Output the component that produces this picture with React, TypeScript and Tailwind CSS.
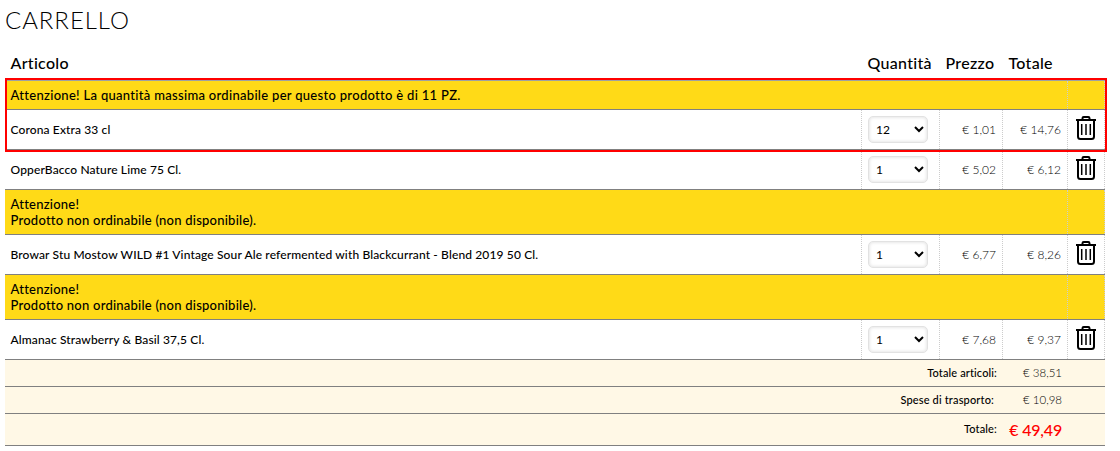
import { useState } from "react";

type Item = {
  name: string;
  qty: number;
  price: string;
  total: string;
  warning?: string[];
};

const ITEMS: Item[] = [
  {
    name: "Corona Extra 33 cl",
    qty: 12,
    price: "€ 1,01",
    total: "€ 14,76",
    warning: ["Attenzione! La quantità massima ordinabile per questo prodotto è di 11 PZ."],
  },
  { name: "OpperBacco Nature Lime 75 Cl.", qty: 1, price: "€ 5,02", total: "€ 6,12" },
  {
    name: "Browar Stu Mostow WILD #1 Vintage Sour Ale refermented with Blackcurrant - Blend 2019 50 Cl.",
    qty: 1,
    price: "€ 6,77",
    total: "€ 8,26",
    warning: ["Attenzione!", "Prodotto non ordinabile (non disponibile)."],
  },
  {
    name: "Almanac Strawberry & Basil 37,5 Cl.",
    qty: 1,
    price: "€ 7,68",
    total: "€ 9,37",
    warning: ["Attenzione!", "Prodotto non ordinabile (non disponibile)."],
  },
];

const QUANTITIES = Array.from({ length: 12 }, (_, i) => i + 1);

function TrashIcon() {
  return (
    <svg width="20" height="24" viewBox="0 0 20 24" fill="none" stroke="#000" strokeWidth="2">
      <path d="M0 4h20" />
      <path d="M6.5 4V2.2Q6.5 1 7.7 1h4.6q1.2 0 1.2 1.2V4" />
      <path d="M2 4v16.5Q2 23 4.5 23h11q2.5 0 2.5-2.5V4" />
      <path d="M5.7 8v11M10 8v11M14.3 8v11" strokeWidth="1.5" />
    </svg>
  );
}

function Warning({ lines }: { lines: string[] }) {
  return (
    <div className="grid grid-cols-[1063px_37px] border-b border-[#808080] bg-[#ffda17]">
      <div
        className={`border-r border-dotted border-[#ccc] pt-[6px] pl-[5.5px] text-[13px] leading-4 font-medium ${
          lines.length > 1 ? "h-11 tracking-[0.23px]" : "h-7 tracking-[0.3px]"
        }`}
      >
        {lines.map((line) => (
          <p key={line}>{line}</p>
        ))}
      </div>
      <div className="border-r border-dotted border-[#ccc]" />
    </div>
  );
}

function Row({ item }: { item: Item }) {
  const [qty, setQty] = useState(item.qty);

  return (
    <div className="grid h-10 grid-cols-[857px_78px_63px_65px_37px] border-b border-[#808080]">
      <div className="flex items-center border-r border-dotted border-[#ccc] pl-[5.5px] text-xs font-medium tracking-[0.13px]">
        {item.name}
      </div>
      <div className="flex items-center border-r border-dotted border-[#ccc] pl-[6px]">
        <select
          value={qty}
          onChange={(e) => setQty(Number(e.target.value))}
          className="h-[27px] w-[60px] rounded-[5px] border border-[#e2e2e2] bg-white pl-[3px] text-xs shadow-[inset_0_0_3px_1px_#e8e8e8]"
        >
          {QUANTITIES.map((n) => (
            <option key={n} value={n}>
              {n}
            </option>
          ))}
        </select>
      </div>
      <div className="flex items-center justify-end border-r border-dotted border-[#ccc] pr-[6px] text-xs font-light">
        {item.price}
      </div>
      <div className="flex items-center justify-end border-r border-dotted border-[#ccc] pr-[6px] text-xs font-light">
        {item.total}
      </div>
      <button
        type="button"
        aria-label="Elimina"
        className="flex items-start justify-center border-r border-dotted border-[#ccc] pt-[6px]"
      >
        <TrashIcon />
      </button>
    </div>
  );
}

export default function App() {
  return (
    <main className="h-[451px] w-[1120px] overflow-hidden bg-white pl-[5px] font-[Lato,sans-serif] text-black">
      <h1 className="h-[46px] pt-[5px] text-2xl leading-[30px] font-light tracking-[0.95px]">CARRELLO</h1>

      <section className="w-[1100px]">
        <header className="grid h-[35px] grid-cols-[857px_78px_63px_65px_37px] items-center border-b border-[#a0a0a0] text-base font-medium tracking-[0.3px]">
          <span className="pl-[5.5px]">Articolo</span>
          <span className="pl-[5.5px]">Quantità</span>
          <span className="pl-[5.5px]">Prezzo</span>
          <span className="pl-[5.5px]">Totale</span>
        </header>

        {ITEMS.map((item, i) => (
          <div key={item.name} className="relative">
            {item.warning && <Warning lines={item.warning} />}
            <Row item={item} />
            {i === 0 && (
              <div className="pointer-events-none absolute -top-[3px] -right-[2px] -bottom-[2px] left-0 z-10 border-2 border-[#f00]" />
            )}
          </div>
        ))}

        {/* Totali */}
        <div className="bg-[#fff8e6] text-right text-[11px]">
          <div className="flex h-[27px] items-center justify-end border-b border-[#808080] pr-[43px]">
            <span className="font-medium tracking-[0.13px]">Totale articoli:</span>
            <span className="w-[65px] text-[11.5px] font-light">€ 38,51</span>
          </div>
          <div className="flex h-[27px] items-center justify-end border-b border-[#808080] pr-[43px]">
            <span className="pr-[3px] font-medium tracking-[0.16px]">Spese di trasporto:</span>
            <span className="w-[65px] text-[11.5px] font-light">€ 10,98</span>
          </div>
          <div className="flex h-8 items-center justify-end border-b border-[#808080] pr-[43px]">
            <span className="font-medium tracking-[0.15px]">Totale:</span>
            <span className="w-[65px] text-base font-medium tracking-[-0.2px] text-[#f00]">€ 49,49</span>
          </div>
        </div>
      </section>
    </main>
  );
}
